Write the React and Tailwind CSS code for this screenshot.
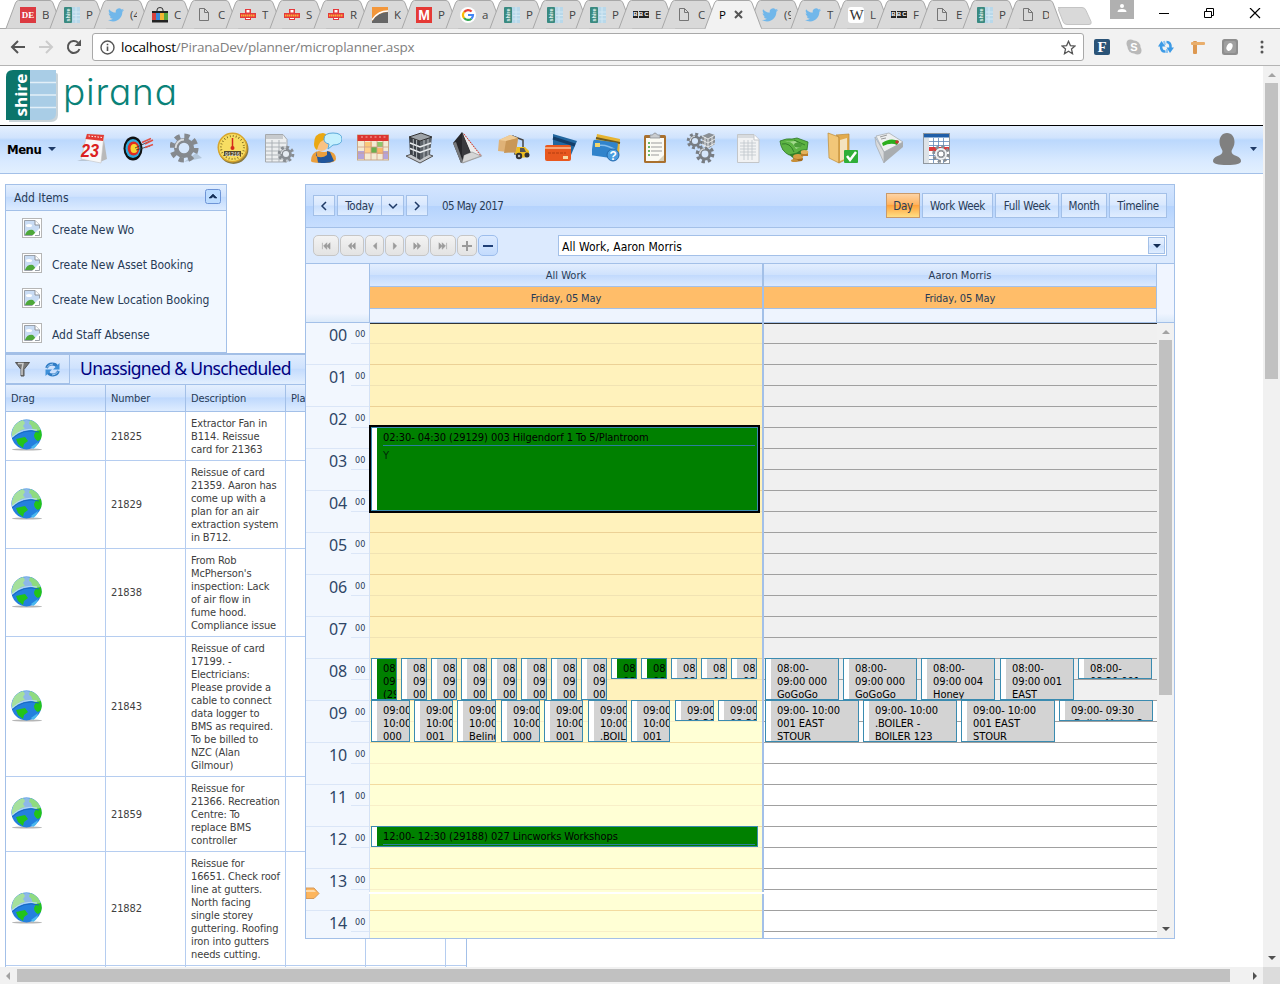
import React from "react";

/* ---------- browser tab icons ---------- */
const Shire = () => (
  <svg width="16" height="16" viewBox="0 0 16 16">
    <rect width="16" height="16" fill="#b8d8ea" />
    <path d="M12 0v16M9 5h7M9 8.500h7M9 12h7" stroke="#d3e8f3" />
    <rect width="8" height="16" rx="1" fill="#3a8a80" />
    <text transform="translate(6 14.500) rotate(-90)" fontSize="6" fontWeight="bold" fill="#e8f4f2" fontFamily="Liberation Sans" textLength="13" lengthAdjust="spacingAndGlyphs">shire</text>
  </svg>
);
const Bird = () => (
  <svg width="16" height="16" viewBox="0 0 24 24">
    <path fill="#71b7ea" d="M24 4.600c-.9.4-1.800.7-2.800.8 1-.6 1.800-1.600 2.200-2.700-1 .6-2 1-3.100 1.200A4.900 4.900 0 0 0 11.800 8.400 14 14 0 0 1 1.700 3.200c-1.300 2.200-.7 5.100 1.500 6.600-.8 0-1.600-.2-2.200-.6 0 2.300 1.600 4.400 3.900 4.900-.7.2-1.500.2-2.200.1.600 2 2.400 3.400 4.600 3.400A9.900 9.900 0 0 1 0 19.500a14 14 0 0 0 7.500 2.200c9.100 0 14.300-7.700 14-14.600 1-.7 1.800-1.600 2.500-2.500z" />
  </svg>
);
const Page = () => (
  <svg width="16" height="16" viewBox="0 0 16 16">
    <path d="M3.500 1.500h5l4 4v8h-9zM8.500 1.500v4h4" fill="none" stroke="#757575" />
  </svg>
);
const Mail = () => (
  <svg width="16" height="16" viewBox="0 0 16 16">
    <path d="M5 2h6v4h5v5h-5v2H5v-2H0V6h5z" fill="#e5383b" />
    <rect x="6.500" y="3" width="3" height="2.500" fill="#fff" />
    <path d="M1 8.500h14" stroke="#f8b03a" strokeWidth="2" strokeDasharray="1.500 .5" />
    <path d="M6 11.500h4" stroke="#fff" />
  </svg>
);
const Bbc = () => (
  <div className="flex w-4 h-[7px] justify-between text-white font-bold text-[6px] leading-[7px] text-center font-['Liberation_Sans',sans-serif]">
    <span className="bg-[#222] w-[5px]">B</span>
    <span className="bg-[#222] w-[5px]">B</span>
    <span className="bg-[#222] w-[5px]">C</span>
  </div>
);
const Google = () => (
  <svg width="16" height="16" viewBox="0 0 16 16">
    <circle cx="8" cy="8" r="8" fill="#fff" />
    <g fill="none" strokeWidth="2.200">
      <path d="M4.200 5A5 5 0 0 1 11.600 4.500" stroke="#ea4335" />
      <path d="M4.200 11.200a5 5 0 0 1 0-6.300" stroke="#fbbc05" />
      <path d="M11.400 11.700a5 5 0 0 1-7.200-.6" stroke="#34a853" />
      <path d="M8 8h5a5 5 0 0 1-1.600 3.700" stroke="#4285f4" />
    </g>
  </svg>
);
const De = () => (
  <div className="w-4 h-4 bg-[#dc3a41] text-white font-bold text-[9px] leading-4 text-center font-['Liberation_Serif',serif]">DE</div>
);
const Shop = () => (
  <svg width="16" height="16" viewBox="0 0 16 16">
    <path d="M5 5V3q0-2.500 3-2.500T11 3v2" fill="none" stroke="#333" />
    <rect y="4" width="16" height="3" fill="#222" />
    <rect y="6" width="4" height="7" fill="#d9413b" /><rect x="4" y="6" width="4" height="7" fill="#3c8bd9" />
    <rect x="8" y="6" width="4" height="7" fill="#f2b632" /><rect x="12" y="6" width="4" height="7" fill="#58a63c" />
    <rect y="13" width="16" height="2.500" fill="#222" />
  </svg>
);
const Kite = () => (
  <svg width="16" height="16" viewBox="0 0 16 16">
    <rect width="16" height="16" fill="#f3973b" />
    <path d="M0 14Q6 5 16 5v11H0z" fill="#666" />
    <path d="M0 13Q6 4 16 4" stroke="#fff" fill="none" strokeWidth="1.500" />
  </svg>
);
const Em = () => (
  <div className="w-4 h-4 border-2 border-[#e53935] bg-[#e53935] text-white font-bold text-[14px] leading-3 text-center font-['Liberation_Sans',sans-serif]">M</div>
);
const Wiki = () => (
  <div className="w-4 h-4 rounded-[3px] bg-white text-[#333] text-[15px] leading-4 text-center font-['Liberation_Serif',serif] tracking-[-1px]">W</div>
);

const tabs = [
  [De, "B"], [Shire, "P"], [Bird, "(4"], [Shop, "C"], [Page, "C"], [Mail, "T"], [Mail, "S"], [Mail, "R"],
  [Kite, "K"], [Em, "P"], [Google, "a"], [Shire, "P"], [Shire, "P"], [Shire, "P"], [Bbc, "E"], [Page, "C"],
  [null, "P"], [Bird, "(9"], [Bird, "T"], [Wiki, "L"], [Bbc, "F"], [Page, "E"], [Shire, "P"], [Page, "D"],
];

function Tab({ Icon, label, wide }) {
  const active = !Icon;
  return (
    <div className={`relative shrink-0 h-[29px] ${wide ? "w-11" : "w-[43px]"} ${active ? "z-10" : ""}`}>
      <svg className="absolute left-0 top-0 overflow-visible" width="58" height="29">
        <path d="M0 28.500L9.500 3Q10.500 .500 12.500 .500H44Q46 .500 47 3L56.500 28.500" fill={active ? "#f2f2f2" : "#d9d9d9"} stroke="#a8a8a8" />
        {active && <path d="M1 28.500H56" stroke="#f2f2f2" strokeWidth="1.500" />}
      </svg>
      <div className="relative flex items-center h-[29px] pl-[14px] text-[11.5px] text-[#444] font-['Open_Sans',sans-serif]">
        {active ? (
          <>
            <span className="w-[15px] text-black">{label}</span>
            <svg width="9" height="9"><path d="M1 1l7 7M8 1L1 8" stroke="#555" strokeWidth="2" /></svg>
          </>
        ) : (
          <>
            <span className="w-4 shrink-0"><Icon /></span>
            <span className="ml-[6px] w-[7px] overflow-hidden whitespace-nowrap shrink-0">{label}</span>
          </>
        )}
      </div>
    </div>
  );
}

function Browser() {
  return (
    <>
      <div className="flex h-[29px] bg-white border-b border-[#a8a8a8] shrink-0 pl-[6px]">
        {tabs.map(([Icon, label], i) => <Tab key={i} Icon={Icon} label={label} wide={i < 11} />)}
        <svg className="mt-[6px] ml-[9px]" width="38" height="20"><path d="M-2 1.500h24q3 0 4 3l5 11q1 3-2 3H7q-3 0-4-3L-1.500 4Q-2 1.500 1 1.500z" transform="translate(2 0)" fill="#d9d9d9" stroke="#c4c4c4" /></svg>
        <div className="ml-[14px] w-6 h-[19px] bg-[#b0b0b0] flex justify-center pt-1">
          <svg width="10" height="9"><circle cx="5" cy="2" r="2" fill="#fff" /><path d="M.5 8q0-3 4.500-3t4.500 3z" fill="#fff" /></svg>
        </div>
        <svg className="ml-[24px] mt-2" width="12" height="12"><path d="M1 5.500h10" stroke="#000" /></svg>
        <svg className="ml-[34px] mt-2" width="12" height="12"><path d="M.5 3.500h7v6h-7zM2.500 3V.500h7v7H8" fill="none" stroke="#000" /></svg>
        <svg className="ml-[33px] mt-2" width="12" height="12"><path d="M1 0l10 10M11 0L1 10" stroke="#000" strokeWidth="1.200" /></svg>
      </div>
      <div className="flex items-center h-[37px] bg-[#f2f2f2] border-b border-[#b4b4b4] shrink-0 pl-[10px]">
        <svg width="16" height="16" viewBox="0 0 16 16"><path d="M15 8H2.500M8 2L2 8l6 6" fill="none" stroke="#555" strokeWidth="2" /></svg>
        <svg className="ml-3" width="16" height="16" viewBox="0 0 16 16"><path d="M1 8h12.500M8 2l6 6-6 6" fill="none" stroke="#ccc" strokeWidth="2" /></svg>
        <svg className="ml-3" width="16" height="16" viewBox="0 0 16 16"><path d="M13.500 10A6 6 0 1 1 12 3.600" fill="none" stroke="#555" strokeWidth="2" /><path d="M15 .5V7H8.500z" fill="#555" /></svg>
        <div className="ml-[10px] w-[992px] h-7 border border-[#a9a9a9] rounded-[3px] bg-white flex items-center px-[7px]">
          <svg width="15" height="15" viewBox="0 0 15 15"><circle cx="7.500" cy="7.500" r="6.500" fill="none" stroke="#555" strokeWidth="1.400" /><path d="M7.500 6.500V11M7.500 3.700v1.600" stroke="#555" strokeWidth="1.600" /></svg>
          <div className="ml-[6px] grow text-[13.5px] text-[#808080] font-['Open_Sans',sans-serif] tracking-[-0.2px]"><span className="text-black">localhost</span>/PiranaDev/planner/microplanner.aspx</div>
          <svg width="15" height="15" viewBox="0 0 15 15"><path d="M7.500 1.300l1.900 4.300 4.600.4-3.500 3.100 1 4.600-4-2.500-4 2.500 1-4.600L1 6l4.600-.4z" fill="none" stroke="#555" strokeWidth="1.300" /></svg>
        </div>
        <div className="ml-[10px] w-4 h-4 rounded-[2px] bg-[#2b5478] text-white font-bold text-[15px] leading-4 text-center font-['Liberation_Serif',serif]">F</div>
        <svg className="ml-4" width="16" height="16"><circle cx="8" cy="8" r="6.500" fill="#b9b9b9" /><circle cx="4.500" cy="4.500" r="4" fill="#b9b9b9" /><circle cx="11.500" cy="11.500" r="4" fill="#b9b9b9" /><text x="4.300" y="12" fontSize="11" fontWeight="bold" fill="#fff" fontFamily="Liberation Sans">S</text></svg>
        <svg className="ml-4" width="16" height="16"><path d="M7.500 12.500Q3 13 3 7M8.500 3Q13 3 12.500 9" fill="none" stroke="#3d9be6" strokeWidth="2.600" /><path d="M0 7.500L3.500 2 7.500 7.500zM8.500 8.500h7.500L12 14z" fill="#3d9be6" /><path d="M6 2l1 4M9 10v4" stroke="#8fc6f3" strokeWidth="2" /></svg>
        <svg className="ml-4" width="16" height="16"><rect x="3" y="2" width="4" height="13" rx="1" fill="#dd9850" /><rect x="1" y="3" width="14" height="3" rx="1" fill="#e9ae6c" /></svg>
        <svg className="ml-4" width="16" height="16"><rect width="16" height="16" rx="2.500" fill="#8e8e8e" /><rect x="2" y="2" width="12" height="12" rx="2" fill="#a0a0a0" /><ellipse cx="7.500" cy="8" rx="2.800" ry="4" transform="rotate(25 7.500 8)" fill="#fff" /></svg>
        <svg className="ml-[22px]" width="4" height="14"><circle cx="2" cy="2" r="1.500" fill="#555" /><circle cx="2" cy="7" r="1.500" fill="#555" /><circle cx="2" cy="12" r="1.500" fill="#555" /></svg>
      </div>
    </>
  );
}

/* ---------- menu bar icons ---------- */
const cog = (cx, cy, r, fill = "#8b9096", hole = "#d5e6fb") => (
  <g>
    <circle cx={cx} cy={cy} r={r * 0.85} fill="none" stroke={fill} strokeWidth={r * 0.38} strokeDasharray={`${r * 0.36} ${r * 0.3075}`} />
    <circle cx={cx} cy={cy} r={r * 0.55} fill={hole} stroke={fill} strokeWidth={r * 0.34} />
    <path d={`M${cx - r * 0.6} ${cy}A${r * 0.6} ${r * 0.6} 0 0 1 ${cx} ${cy - r * 0.6}`} fill="none" stroke="#d9dcdf" strokeWidth={r * 0.14} />
  </g>
);

const menuIcons = [
  <g>
    <path d="M1 29l12-4v4z" fill="#a9b6c4" opacity=".7" />
    <path d="M27 2l4 25-7 3z" fill="#b9b9b9" />
    <path d="M11 2l17 1-3 28-20-4z" fill="#f8f8f8" stroke="#c3c3c3" strokeWidth=".6" />
    <path d="M11 2l17 1-1 6L9.500 7z" fill="#e23a34" />
    <path d="M12.500 4l14 1.500" stroke="#fff" strokeDasharray="1.500 1.500" />
    <text x="5" y="25" fontSize="19" fontStyle="italic" fontWeight="bold" fill="#db2020" fontFamily="Liberation Sans" textLength="18" lengthAdjust="spacingAndGlyphs">23</text>
  </g>,
  <g>
    <ellipse cx="10" cy="16.500" rx="9.500" ry="12" fill="#111" />
    <ellipse cx="10" cy="16.500" rx="7.500" ry="9.500" fill="#2fa9dd" />
    <ellipse cx="10.500" cy="16.500" rx="5.800" ry="7" fill="#e02b20" />
    <ellipse cx="11" cy="16.500" rx="3.500" ry="4.500" fill="#f7d431" />
    <path d="M12 16l15-7M13 18l14-4" stroke="#333" strokeWidth=".8" />
    <path d="M22 12l8-4M22 15.500l8-3M19 10.500l9-4" stroke="#e05045" strokeWidth="1.400" />
  </g>,
  <g>
    <path d="M14 30l18-4-6-5z" fill="#9fb0c2" opacity=".6" />
    {cog(14, 16, 14, "#85898e")}
  </g>,
  <g>
    <circle cx="16.500" cy="17" r="15" fill="#8a7a40" />
    <circle cx="15.500" cy="15.500" r="15" fill="#d7a52a" />
    <circle cx="15.500" cy="15.500" r="13.500" fill="#f7dd62" />
    <circle cx="15.500" cy="15.500" r="11.500" fill="none" stroke="#665212" strokeWidth="2" strokeDasharray=".7 2.310" />
    <path d="M15.500 6v9" stroke="#d42a1c" strokeWidth="1.500" /><circle cx="15.500" cy="16" r="2" fill="#d42a1c" />
    <rect x="7" y="19" width="17" height="5" fill="#54492a" />
    <text x="8" y="23.500" fontSize="5" fill="#fff" fontFamily="Liberation Mono">01216</text>
  </g>,
  <g>
    <path d="M1.500 2.500H19l4 5V30H1.500z" fill="#eceeef" stroke="#a5a9ad" />
    <path d="M2 3h17v4H2z" fill="#c7cacd" />
    <path d="M2 11h20M2 15h20M2 19h20M2 23h20M2 27h20M8 8v22M15 8v22" stroke="#a8adb2" strokeWidth=".9" />
    {cog(22, 22, 8, "#888d92", "#e6ecf2")}
  </g>,
  <g>
    <circle cx="11.500" cy="12" r="7" fill="#f9c283" /><path d="M4 12q0-11 9-11 5 1 5 6Q9 7 7 18q-3-2-3-6z" fill="#eaa813" />
    <path d="M1 29q0-9 8-10 6 2 9 0 8 1 8 8 0 4-12 4-13 0-13-2z" fill="#eb9f3c" />
    <path d="M6 19v5q6 3 11-1v-4l3 1 4 9q-5 3-16 1.500z" fill="#21569b" />
    <path d="M23 1q9 0 9 6t-9 6l-5 4 1-5q-5-1-5-5 0-6 9-6z" fill="#c5f0fe" stroke="#5aa8d8" />
  </g>,
  <g>
    <rect x=".5" y="3" width="31" height="25" fill="#f3ead2" stroke="#c8a988" />
    <rect x=".5" y="3" width="31" height="6" fill="#dc3530" />
    <path d="M4 5h25" stroke="#f7b0a8" strokeDasharray="2 2.500" />
    <rect x="8" y="10" width="7" height="5" fill="#fac87a" /><rect x="20" y="10" width="6" height="5" fill="#8fc66c" />
    <rect x="14" y="15" width="6" height="6" fill="#69b04e" /><rect x="20" y="16" width="6" height="6" fill="#fab96a" />
    <rect x="1" y="19" width="6" height="8" fill="#b4a5da" /><rect x="26" y="19" width="5" height="8" fill="#b4a5da" /><rect x="8" y="15" width="6" height="6" fill="#ffd08b" />
    <path d="M1 15h30M1 21h30M7.500 9v19M14 9v19M20 9v19M26 9v19" stroke="#cf9d86" strokeWidth=".8" />
  </g>,
  <g>
    <path d="M2 24l14 7 13-7-13-5z" fill="#c4c7ca" stroke="#555" />
    <path d="M5 5l11 4v19L6 22z" fill="#3b4046" /><path d="M28 5L16 9v19l10-6z" fill="#5b6167" /><path d="M5 5l12-4 11 4-12 4z" fill="#9ea3a8" stroke="#333" />
    <path d="M6 11l10 4 11-4M6 16.500l10 4 11-4" fill="none" stroke="#eceff1" strokeWidth="1.600" />
    <path d="M9.300 7v16M12.600 8v18M20 8v18M24 7v16" stroke="#cfd4d8" strokeWidth=".8" />
  </g>,
  <g>
    <path d="M12 1l19 23-19 7z" fill="#ececec" stroke="#999" strokeWidth=".6" />
    <path d="M11 0L2 11l8 20 10-10z" fill="#26262a" /><path d="M2 11l8 20 2-1L5 10z" fill="#77797c" />
    <path d="M11 31l19-7-9-4-8 3z" fill="#d5d5d5" stroke="#777" strokeWidth=".5" /><path d="M11 0l8 20-8 4z" fill="#3a3a3e" />
    <path d="M13 2l17 22" stroke="#dd3838" strokeDasharray="1.500 1" />
  </g>,
  <g>
    <path d="M17 5l8 3v14h-8z" fill="none" stroke="#444" strokeWidth="1.500" /><path d="M15 3v15" stroke="#444" />
    <path d="M1 8l11-5 8 3-2 15-18-2z" fill="#dfb277" /><path d="M1 8l7 1 12-3-8-3z" fill="#f0cd98" />
    <path d="M8 9l12-3-2 14-12 1z" fill="#c99757" />
    <path d="M19 15h8l4 4v6l-9 1-5-4z" fill="#edbd20" /><path d="M22 16h4l2 4h-6z" fill="#555" />
    <circle cx="21" cy="24" r="3.200" fill="#333" /><circle cx="29" cy="23" r="2.500" fill="#333" /><circle cx="21" cy="24" r="1.200" fill="#bbb" />
  </g>,
  <g>
    <path d="M8 2l24 7-6 14-18-6z" fill="#23679f" /><path d="M8 6l22 7" stroke="#133d68" strokeWidth="3" />
    <rect x="0" y="13" width="26" height="16" rx="2" fill="#e8581f" /><path d="M0 16h26" stroke="#f6a578" strokeWidth="2" />
    <rect x="18" y="24" width="5" height="3" fill="#f8d9a0" /><path d="M3 21h18" stroke="#b23c0f" strokeDasharray="3 1" />
  </g>,
  <g>
    <path d="M5 2l23 5-1 17L3 14z" fill="#e6b431" /><path d="M4 6l24 5" stroke="#6d5a20" strokeWidth="2" />
    <rect x="0" y="9" width="25" height="16" rx="2" fill="#3083cb" transform="rotate(8 12 18)" />
    <path d="M3 14q11-3 22 5" stroke="#83bdec" strokeWidth="1.500" fill="none" />
    <rect x="3" y="11" width="5" height="4" fill="#f3d66a" />
    <circle cx="21" cy="23" r="6" fill="#4a9de0" stroke="#2469ad" /><text x="17.500" y="27.500" fontSize="12" fontWeight="bold" fill="#fff" fontFamily="Liberation Sans">?</text>
  </g>,
  <g>
    <rect x="5" y="3" width="22" height="28" rx="1.500" fill="#a9702e" /><rect x="7" y="6" width="18" height="23" fill="#fbfaf4" />
    <path d="M11 6V3h2.500q2.500-4 5 0H21v3z" fill="#c9ccd0" stroke="#7e8388" strokeWidth=".7" />
    <path d="M12 11h11M12 15h11M12 19h11M12 23h8" stroke="#9b9b9b" /><path d="M9 11h2M9 15h2M9 19h2M9 23h2" stroke="#3aa13a" strokeWidth="1.500" />
    <path d="M25 23l-6 6h6z" fill="#d8d2bd" />
  </g>,
  <g>
    {cog(10, 9, 8, "#787d83")}{cog(20, 22, 9, "#787d83")}
    <path d="M17 4l7-3 6 2v9l-6 4-7-4z" fill="#8b9095" /><path d="M17 4l6 3 7-4M23 7v9M17 8l6 3 7-4M17 12l6 3 7-4M20 5v10M27 5v9" stroke="#eef0f2" fill="none" strokeWidth=".9" />
  </g>,
  <g>
    <path d="M5.500 2.500H22l5 5V30.500H5.500z" fill="#f1f2f3" stroke="#c3c6c9" /><path d="M6 3h16v3H6z" fill="#d8dbde" />
    <path d="M8 11h16M8 14h16M8 17h16M8 20h16M8 23h16M12 8v20M16 8v20M20 8v20" stroke="#bfc5ca" strokeWidth=".8" /><path d="M22 3v5h5" fill="#fff" stroke="#c3c6c9" />
  </g>,
  <g>
    <path d="M3 17l13-4 12 3-3 8-11 2z" fill="#35802a" /><path d="M1 9q7-3 12-2l5-1 11 4-1 8q-6-1-10 3l-8 2q-8-4-9-14z" fill="#5cb343" stroke="#2f7726" strokeWidth=".8" />
    <path d="M3 12q8-2 12 8M15 8l11 5" fill="none" stroke="#2f7726" strokeWidth=".9" /><path d="M6 10q5-1 8 2l3 5 6-3-7-5z" fill="#a4da8e" /><ellipse cx="19" cy="13" rx="4" ry="2.500" fill="#4c9e3a" />
    <ellipse cx="19" cy="27" rx="5" ry="2.500" fill="#a56c1f" /><ellipse cx="19" cy="24.500" rx="5" ry="2.500" fill="#d79d42" /><path d="M22 20h7v4h-7z" fill="#b97d2b" /><ellipse cx="25.500" cy="20" rx="3.800" ry="2" fill="#e3b35c" /><ellipse cx="15.500" cy="28.500" rx="3.500" ry="1.600" fill="#c88f37" />
  </g>,
  <g>
    <path d="M2 1l11 4v26L3 26z" fill="#f2c778" stroke="#bd8b35" strokeWidth=".7" /><path d="M10 3l13-1v24l-10 5V5z" fill="#e2ab4e" stroke="#bd8b35" strokeWidth=".7" />
    <path d="M14 8l7-2v20l-7 3z" fill="#f4e3c0" />
    <rect x="18" y="18" width="14" height="13" rx="1" fill="#2fae38" /><path d="M21 24l3 4 6-8" fill="none" stroke="#fff" strokeWidth="2.500" />
  </g>,
  <g>
    <path d="M3 4l13-3 14 9-19 10z" fill="#eef0f1" stroke="#a4a8ab" strokeWidth=".7" /><path d="M2 5l9 15v11L3 13z" fill="#d9dbdd" stroke="#a4a8ab" strokeWidth=".7" /><path d="M11 20l19-10v5L11 31z" fill="#a9adb0" />
    <path d="M7 5l7-2M8 7l5-1" stroke="#999" /><path d="M9 11q8-6 17-2l-2 4q-6-3-14 1z" fill="#2cae1e" /><circle cx="24" cy="10" r="1.800" fill="#c4342d" />
  </g>,
  <g>
    <rect x="3.500" y="1.500" width="26" height="30" fill="#fff" stroke="#8f979f" /><rect x="4" y="2" width="25" height="3.500" fill="#1f5ea8" />
    <rect x="4" y="6" width="5" height="25" fill="#dde3e8" /><path d="M9 9.500h20M9 13.500h20M9 23.500h20M9 27.500h20M13.500 6v25M18.500 6v25M23.500 6v25" stroke="#5f87b5" strokeWidth=".8" />
    <rect x="9" y="15" width="20" height="4" fill="#dc3b3b" />{cog(21, 22, 8.500, "#888d92", "#fff")}<circle cx="21" cy="22" r="5" fill="none" stroke="#f1f3f5" strokeWidth="2" /><circle cx="21" cy="22" r="3" fill="#fff" stroke="#888d92" />
  </g>,
];

function MenuBar() {
  return (
    <div className="flex h-12 w-[1263px] border-b border-[#a3c0e8] bg-[linear-gradient(#e4effe,#d0e3fd_25%,#bbd8fd_30%,#d9eaff_75%,#e2f0fe)] pl-[7px] shrink-0">
      <div className="text-[13px] font-bold text-black leading-[47px] w-[34px] tracking-[-0.5px]">Menu</div>
      <svg className="ml-[7px] mt-[21px]" width="8" height="5"><path d="M0 0h8L4 4z" fill="#1f3a66" /></svg>
      <div className="ml-[20px] mt-[6px] w-[876px] flex justify-between">
        {menuIcons.map((g, i) => <svg key={i} width="32" height="32" viewBox="0 0 32 32">{g}</svg>)}
      </div>
      <svg className="ml-[261px] mt-[7px]" width="28" height="32" viewBox="0 0 28 32">
        <path d="M14 0c5 0 7.500 4 7.500 9 0 4-2 6-3 9 0 3 2 4 5 5 3 1 4.500 3 4.500 5q0 4-14 4T0 28c0-2 1.500-4 4.500-5 3-1 5-2 5-5-1-3-3-5-3-9 0-5 2.500-9 7.500-9z" fill="#808080" />
      </svg>
      <svg className="ml-[9px] mt-[21px]" width="7" height="5"><path d="M0 0h7L3.500 4z" fill="#1f3a66" /></svg>
    </div>
  );
}

/* ---------- left side ---------- */
const BrokenImage = () => (
  <svg width="20" height="20" viewBox="0 0 20 20">
    <rect x=".5" y=".5" width="19" height="19" fill="#fff" stroke="#b6b6b6" />
    <path d="M2.500 2.500H13l4.500 4.500v10.500h-15z" fill="#c9dcf4" stroke="#9aa0a8" />
    <path d="M3 17q2-6 8-5l4 5z" fill="#4ea83a" /><ellipse cx="7" cy="7.500" rx="3" ry="1.500" fill="#fff" />
    <path d="M13 2.500V7h4.500" fill="#fff" stroke="#8b9098" /><path d="M10 18l8-8v8z" fill="#fff" /><path d="M13 17.500h4.500V13" fill="none" stroke="#9aa0a8" />
  </svg>
);

function AddItems() {
  return (
    <div className="w-[222px] h-[169px] border border-[#a3c0e8] bg-[#f2f8ff]">
      <div className="h-[26px] border-b border-[#a3c0e8] bg-[linear-gradient(#e3effe,#cfe2fd_45%,#c2dbfd_50%,#dcebff)] flex items-center justify-between pl-2 pr-[5px]">
        <span className="text-[12px] text-[#283b56]">Add Items</span>
        <svg className="mt-[-2px]" width="16" height="15"><rect x=".5" y=".5" width="15" height="14" rx="2" fill="#bcdcff" stroke="#6d94d6" /><path d="M4 9l4-4 4 4H9.500L8 7.500 6.500 9z" fill="#132d55" stroke="#132d55" strokeWidth=".6" /></svg>
      </div>
      <div className="pt-[7px] pl-4 flex flex-col gap-[15px]">
        {["Create New Wo", "Create New Asset Booking", "Create New Location Booking", "Add Staff Absense"].map((t) => (
          <div key={t} className="flex h-5 items-center gap-[10px]">
            <BrokenImage />
            <span className="text-[12px] leading-5 text-[#283b56] whitespace-nowrap pt-[3px] tracking-[-0.06px]">{t}</span>
          </div>
        ))}
      </div>
    </div>
  );
}

const Globe = () => (
  <svg className="-mt-[2px]" width="32" height="32" viewBox="0 0 32 32">
    <ellipse cx="16" cy="30.500" rx="15" ry="1" fill="#b5b5b5" />
    <circle cx="15.500" cy="15.500" r="15" fill="#2480de" />
    <path d="M.8 13A15 15 0 0 1 30.200 13Q15 7 1 19q-1-3-.2-6z" fill="#8db8e8" />
    <path d="M1 14Q2 4 12 1l2 3-2 3 2 3-4 1-3 3-5 4q-1.500-1-1-4z" fill="#a5e09c" />
    <path d="M19 1q8 2 11 11l-4 1-4-2-2-5-2-1z" fill="#8fdb80" />
    <path d="M25 12l5-1q1.500 5 0 9l-3 2q-4-2-4-6z" fill="#22c41a" />
    <path d="M5 20l9-2 3 4-4 3-1 4-5-4z" fill="#22c41a" />
    <path d="M20 28l7-5q-1 5-5 7z" fill="#4bb8ef" />
    <path d="M1 20Q12 9 28 13" fill="none" stroke="#1a68c4" strokeWidth="1" /><path d="M1 18Q12 8 26 11" fill="none" stroke="#b5daf9" />
  </svg>
);

const orders = [
  ["21825", ["Extractor Fan in", "B114. Reissue", "card for 21363"]],
  ["21829", ["Reissue of card", "21359. Aaron has", "come up with a", "plan for an air", "extraction system", "in B712."]],
  ["21838", ["From Rob", "McPherson's", "inspection: Lack", "of air flow in", "fume hood.", "Compliance issue"]],
  ["21843", ["Reissue of card", "17199. -", "Electricians:", "Please provide a", "cable to connect", "data logger to", "BMS as required.", "To be billed to", "NZC (Alan", "Gilmour)"]],
  ["21859", ["Reissue for", "21366. Recreation", "Centre: To", "replace BMS", "controller"]],
  ["21882", ["Reissue for", "16651. Check roof", "line at gutters.", "North facing", "single storey", "guttering. Roofing", "iron into gutters", "needs cutting."]],
  ["", [""]],
];

const gridCols = "grid grid-cols-[100px_80px_100px_80px_80px_20px]";

function Unassigned() {
  const cell = "border-r border-[#b5cdf0] last:border-r-0";
  return (
    <div className="w-[462px] border-x border-[#a3c0e8] border-t-2 border-t-[#a3bfe6] text-[11px] tracking-[-0.11px]">
      <div className="flex h-[30px] border-b border-[#a3c0e8] bg-[linear-gradient(#dfecfe,#cfe2fd_45%,#c5dcfd_50%,#e3effe)]">
        <div className="flex items-center w-16 border-r border-b border-[#a3c0e8] pl-[9px]">
          <svg width="15" height="15" viewBox="0 0 15 15"><path d="M.5.500h14L9 7.500V14H6V7.500z" fill="#777" stroke="#555" /><path d="M3 1.500h5L7 7v6" fill="none" stroke="#ccc" strokeWidth="1.500" /></svg>
          <svg className="ml-[14px]" width="17" height="15" viewBox="0 0 17 15"><path d="M2.500 6Q4 2 8 2t5 2.500M14.500 9Q13 13 9 13t-5-2.500" fill="none" stroke="#2f7bc4" strokeWidth="2.800" /><path d="M15.500 1v6.500H9zM1.500 14V7.500H8z" fill="#3d8fd8" /><path d="M3 5.500Q5 2 9 2M14 9.500Q12 13 8 13" fill="none" stroke="#a5d0f5" /></svg>
        </div>
        <div className="pl-[10px] text-[17.5px] leading-[27px] text-[#000080] whitespace-nowrap tracking-[-0.66px] font-['Noto_Sans',sans-serif]">Unassigned &amp; Unscheduled</div>
      </div>
      <div className={`${gridCols} h-[27px] border-b border-[#a3c0e8] bg-[linear-gradient(#e4effe,#cfe2fd_45%,#bfd9fd_50%,#deecff)] text-[#283b56] leading-[27px]`}>
        {["Drag", "Number", "Description", "Planned", "", ""].map((t, i) => <div key={i} className="border-r border-[#a3c0e8] pl-[5px] last:border-r-0 overflow-hidden">{t}</div>)}
      </div>
      {orders.map(([n, lines], i) => (
        <div key={i} className={`${gridCols} border-b border-[#b5cdf0] bg-white text-[#404040] leading-[13px]`}>
          <div className={`${cell} flex items-center pl-[5px]`}>{n && <Globe />}</div>
          <div className={`${cell} flex items-center pl-[5px]`}>{n}</div>
          <div className={`${cell} pl-[5px] pt-[5px] pb-1 whitespace-nowrap`}>{lines.map((l, k) => <div key={k} className="h-[13px]">{l}</div>)}</div>
          <div className={cell} /><div className={cell} /><div className={cell} />
        </div>
      ))}
    </div>
  );
}

/* ---------- scheduler ---------- */
const btn = "border border-[#a3c0e8] bg-[linear-gradient(#e6f0fe,#d9e8fe_48%,#c9dffd_52%,#e0edff)]";

function ChevronButton({ d, className }) {
  return <div className={`${className} flex items-center justify-center`}><svg width="10" height="10"><path d={d} fill="none" stroke="#1f3a66" strokeWidth="1.500" /></svg></div>;
}

const navs = [
  ["w-[26px]", "M1.500 1v8M7 1L3 5l4 4zM11 1L7 5l4 4z"],
  ["w-6", "M5.500 1l-4 4 4 4zM10 1L6 5l4 4z"],
  ["w-[19px]", "M8 1L4 5l4 4z"],
  ["w-[19px]", "M4 1l4 4-4 4z"],
  ["w-6", "M2 1l4 4-4 4zM6.500 1l4 4-4 4z"],
  ["w-[26px]", "M1 1l4 4-4 4zM5 1l4 4-4 4zM10.500 1v8"],
];

function Event({ x, y, w, h, green, lines, line }) {
  return (
    <div style={{ left: x, top: y, width: w, height: h }} className={`absolute overflow-hidden border border-[#3a8bb0] flex ${green ? "bg-[#008000]" : "bg-[#d3d3d3]"}`}>
      <div className="w-[5px] bg-white shrink-0" />
      <div className="ml-[6px] mr-[2px] pt-[3px] grow text-[11px] leading-[13px] whitespace-nowrap tracking-[-0.06px] text-black">
        <div className={line ? "border-b border-[#2b7f9e] h-[15px]" : "h-[13px]"}>{lines[0]}</div>
        {lines.slice(1).map((l, i) => <div key={i} className={line ? "mt-[3px] text-[#00280a]" : "h-[13px]"}>{l}</div>)}
      </div>
    </div>
  );
}

const third8 = ["(29", "00", "00", "00", "00", "00", "004", "00"];
const third9 = ["000", "001", "Belinda", "000", "001", ".BOILER", "001"];
const x9 = [1, 44, 87, 131, 174, 218, 261, 305, 348];

const allWorkEvents = [
  ...third8.map((t, i) => ({ x: 1 + 30 * i, y: 335, w: 26, h: 42, green: i === 0, lines: ["08", "09", t] })),
  ...[8, 9, 10, 11, 12].map((i) => ({ x: 1 + 30 * i, y: 335, w: 26, h: 21, green: i < 10, lines: ["08", "08"] })),
  ...x9.map((x, i) => ({ x, y: 377, w: 39, h: i < 7 ? 42 : 21, lines: i < 7 ? ["09:00-", "10:00", third9[i]] : ["09:00-", "09:30"] })),
  { x: 1, y: 503, w: 387, h: 21, green: true, line: true, lines: ["12:00- 12:30 (29188) 027 Lincworks Workshops"] },
];

const aaronEvents = [
  { x: 1, y: 335, w: 74, h: 42, lines: ["08:00-", "09:00 000", "GoGoGo"] },
  { x: 79, y: 335, w: 74, h: 42, lines: ["08:00-", "09:00 000", "GoGoGo"] },
  { x: 157, y: 335, w: 74, h: 42, lines: ["08:00-", "09:00 004", "Honey"] },
  { x: 236, y: 335, w: 74, h: 42, lines: ["08:00-", "09:00 001", "EAST"] },
  { x: 314, y: 335, w: 74, h: 21, lines: ["08:00-", "08:30 001"] },
  { x: 1, y: 377, w: 94, h: 42, lines: ["09:00- 10:00", "001 EAST", "STOUR"] },
  { x: 99, y: 377, w: 94, h: 42, lines: ["09:00- 10:00", ".BOILER -", "BOILER 123"] },
  { x: 197, y: 377, w: 94, h: 42, lines: ["09:00- 10:00", "001 EAST", "STOUR"] },
  { x: 295, y: 377, w: 94, h: 21, lines: ["09:00- 09:30", ".Boiler Motor 2"] },
];

const slots = Array.from({ length: 30 }, (_, i) => i);

function Scheduler() {
  return (
    <div className="relative z-10 w-[870px] h-[755px] border border-[#a3c0e8] bg-[#dceafe] flex flex-col shrink-0 overflow-hidden text-[#283b56]">
      <div className="h-[43px] border-b border-[#a3c0e8] bg-[linear-gradient(#d4e5fe,#c4dcfd_49%,#b5d3fd_51%,#c7defe)] flex items-start pt-[8px] px-[7px] text-[11.5px] shrink-0">
        <div className="flex w-full h-[25px] items-center tracking-[-0.25px]">
          <ChevronButton className={`${btn} w-[22px] h-[21px]`} d="M7 1L3 5l4 4" />
          <div className={`${btn} ml-[2px] w-[45px] h-[21px] text-center leading-[20px]`}>Today</div>
          <ChevronButton className={`${btn} -ml-px w-[23px] h-[21px]`} d="M1 3l4 4 4-4" />
          <ChevronButton className={`${btn} ml-[2px] w-[22px] h-[21px]`} d="M3 1l4 4-4 4" />
          <div className="ml-[14px] mt-[2px] grow tracking-[-0.57px]">05 May 2017</div>
          <div className="flex gap-[2px] text-center leading-[24px] text-[11.5px] tracking-[-0.3px]">
            <div className="w-[34px] h-[25px] border border-[#c99a6a] bg-[linear-gradient(#fdd3a4,#ffb563_45%,#ffa23c_50%,#ffdf84)]">Day</div>
            <div className={`${btn} w-[71px] h-[25px]`}>Work Week</div>
            <div className={`${btn} w-16 h-[25px]`}>Full Week</div>
            <div className={`${btn} w-[46px] h-[25px]`}>Month</div>
            <div className={`${btn} w-[58px] h-[25px]`}>Timeline</div>
          </div>
        </div>
      </div>
      <div className="h-9 border-b border-[#a3c0e8] flex items-start pt-[7px] pl-[7px] pr-[7px] shrink-0">
        <div className="flex gap-px">
          {navs.map(([w, d], i) => (
            <div key={i} className={`${w} h-[21px] rounded-[5px] border border-[#c6c6c6] bg-[linear-gradient(#f3f3f3,#e3e3e3)] flex items-center justify-center`}>
              <svg width="10" height="8" viewBox="0 0 12 10"><path d={d} fill="#9a9a9a" stroke="#9a9a9a" strokeWidth=".8" /></svg>
            </div>
          ))}
          <div className="w-5 h-[21px] rounded-[5px] border border-[#c6c6c6] bg-[linear-gradient(#f3f3f3,#e3e3e3)] flex items-center justify-center"><svg width="10" height="10"><path d="M0 5h10M5 0v10" stroke="#9a9a9a" strokeWidth="2" /></svg></div>
          <div className="w-5 h-[21px] rounded-[5px] border border-[#9dbdec] bg-[linear-gradient(#dceaff,#c3dbfd)] flex items-center justify-center"><svg width="10" height="10"><path d="M0 5h10" stroke="#1f3f77" strokeWidth="2" /></svg></div>
        </div>
        <div className="ml-auto w-[609px] h-[21px] border border-[#a3c0e8] bg-white flex items-center justify-between pl-[3px] pr-px">
          <span className="text-[12px] text-black pt-[2px] tracking-[0.03px]">All Work, Aaron Morris</span>
          <div className={`${btn} w-[17px] h-[17px] flex items-center justify-center`}><svg width="8" height="4"><path d="M0 0h8L4 4z" fill="#132d55" /></svg></div>
        </div>
      </div>
      <div className="h-[59px] flex border-b border-[#a3c0e8] text-center text-[11px] tracking-[-0.15px] bg-[#eef4fe] shrink-0">
        <div className="w-16 border-r border-[#a3c0e8] bg-[linear-gradient(#f0f5ff_85%,#dceafa)]" />
        {["All Work", "Aaron Morris"].map((t, i) => (
          <div key={t} className={i ? "w-[393px] border-r border-[#a3c0e8]" : "w-[394px] border-r-2 border-[#a3c0e8]"}>
            <div className="h-[23px] leading-[23px] border-b border-[#a3c0e8] bg-[linear-gradient(#e3eefe,#cfe2fd_48%,#c2dafd_52%,#dbe9fe)] tracking-[0.02px]">{t}</div>
            <div className="h-[22px] leading-[23px] border-b border-[#a3c0e8] bg-[#ffbd69]">Friday, 05 May</div>
          </div>
        ))}
        <div className="grow bg-[linear-gradient(#f0f5ff_85%,#dceafa)]" />
      </div>
      <div className="flex h-[615px] overflow-hidden">
        <div className="relative w-16 bg-[#f2f7fe] border-r border-[#d5e2f5] shrink-0">
          {slots.slice(0, 15).map((h) => (
            <div key={h} className="h-[42px] flex border-b border-[#dbe6f7] justify-end">
              <div className="pr-1 text-[16px] leading-[24px] tracking-[-0.1px] text-[#2f4666] font-['Noto_Sans',sans-serif]">{String(h).padStart(2, "0")}</div>
              <div className="w-[18px] h-[21px] border-b border-[#dbe6f7] text-[9px] leading-[22px] pl-[4px]">00</div>
            </div>
          ))}
          <svg className="absolute left-0 top-[564px]" width="14" height="13"><path d="M0 1h8l5 5.500-5 5H0z" fill="#fdb55c" stroke="#d59a5c" /><path d="M0 3h8l2 2H0z" fill="#fdd9a8" /></svg>
        </div>
        <div className="relative w-[394px] border-r-2 border-[#a3c0e8] shrink-0">
          {slots.map((i) => (
            <div key={i} className={`h-[21px] border-b ${i < 18 ? "bg-[#fff2bc]" : "bg-[#ffffd5]"} ${i % 2 ? (i < 18 ? "border-[#ecd196]" : "border-[#f3dba0]") : (i < 18 ? "border-[#f1e3b3]" : "border-[#f8efc8]")}`} />
          ))}
          <div className="absolute left-0 top-0 w-full h-px bg-[#333]" />
          {allWorkEvents.map((e, i) => <Event key={i} {...e} />)}
          <div className="absolute -left-px top-[102px] w-[391px] h-[88px] bg-black">
            <Event x={2} y={2} w={387} h={84} green line lines={["02:30- 04:30 (29129) 003 Hilgendorf 1 To 5/Plantroom", "Y"]} />
          </div>
          <div className="absolute -left-px top-[569px] w-[395px] h-[2px] bg-white" />
        </div>
        <div className="relative w-[393px] shrink-0">
          {slots.map((i) => <div key={i} className={`h-[21px] border-b border-[#a0a0a0] ${i < 18 ? "bg-[#f0f0f0]" : "bg-white"}`} />)}
          <div className="absolute left-0 top-0 w-full h-px bg-[#333]" />
          {aaronEvents.map((e, i) => <Event key={i} {...e} />)}
        </div>
        <div className="w-[17px] bg-[#f1f1f1] flex flex-col items-center shrink-0">
          <svg className="mt-[7px]" width="8" height="4"><path d="M0 4h8L4 0z" fill="#a3a3a3" /></svg>
          <div className="mt-[6px] w-[13px] h-[355px] bg-[#c1c1c1]" />
          <svg className="mt-auto mb-[7px]" width="8" height="4"><path d="M0 0h8L4 4z" fill="#505050" /></svg>
        </div>
      </div>
    </div>
  );
}

export default function App() {
  return (
    <div className="w-[1280px] h-[984px] overflow-hidden bg-white flex flex-col font-['DejaVu_Sans_Condensed','DejaVu_Sans',sans-serif]">
      <Browser />
      <div className="flex h-[901px] shrink-0">
        <div className="w-[1263px] h-[901px] overflow-hidden flex flex-col">
          <div className="h-[60px] border-b border-black flex pt-1 pl-[6px] shrink-0">
            <svg width="54" height="54" viewBox="0 0 54 54">
              <path d="M3 3h47q2 0 2 2v40q0 7-7 7H3z" fill="#c9d3d8" />
              <path d="M8 0h42v43q0 7-7 7H24V0z" fill="#a9cde6" />
              <path d="M24 12.500h26M24 25h26M24 37.500h26" stroke="#e2eff8" strokeWidth="1.300" />
              <path d="M7 0h17v50H0V7q0-7 7-7z" fill="#0b756b" />
              <text transform="translate(21 46.500) rotate(-90)" fontSize="16" fontWeight="bold" fill="#fff" fontFamily="Open Sans" textLength="43" lengthAdjust="spacingAndGlyphs">shire</text>
            </svg>
            <div className="ml-[3px] text-[37px] leading-[43px] text-[#0a8278] font-light font-['Inter',sans-serif] [font-feature-settings:'cv11'] tracking-[0.8px]">pirana</div>
          </div>
          <MenuBar />
          <div className="flex pt-[10px] pl-[5px] items-start">
            <div className="w-[300px] shrink-0">
              <AddItems />
              <Unassigned />
            </div>
            <Scheduler />
          </div>
        </div>
        <div className="w-[17px] bg-[#f1f1f1] flex flex-col items-center">
          <svg className="mt-[7px]" width="8" height="4"><path d="M0 4h8L4 0z" fill="#a3a3a3" /></svg>
          <div className="mt-[6px] w-[13px] h-[296px] bg-[#c1c1c1]" />
          <svg className="mt-auto mb-[7px]" width="8" height="4"><path d="M0 0h8L4 4z" fill="#505050" /></svg>
        </div>
      </div>
      <div className="flex h-[17px] shrink-0">
        <div className="w-[1263px] bg-[#f1f1f1] flex items-center">
          <svg className="ml-[6px]" width="4" height="8"><path d="M4 0v8L0 4z" fill="#a3a3a3" /></svg>
          <div className="ml-[7px] w-[1213px] h-[13px] bg-[#c1c1c1]" />
          <svg className="ml-auto mr-[6px]" width="4" height="8"><path d="M0 0v8l4-4z" fill="#505050" /></svg>
        </div>
        <div className="w-[17px] bg-[#dcdcdc]" />
      </div>
    </div>
  );
}
